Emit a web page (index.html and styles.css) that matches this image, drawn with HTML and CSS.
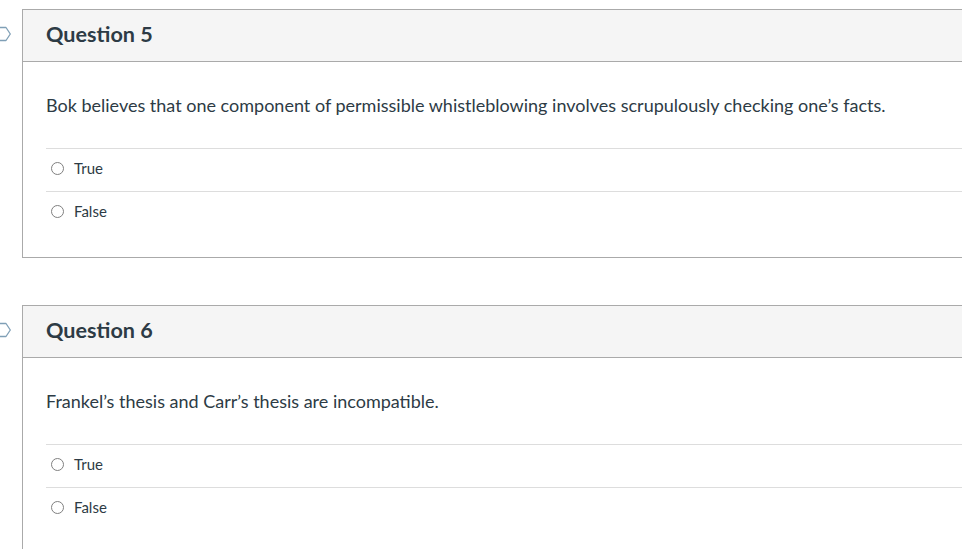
FILE: index.html
```html
<!DOCTYPE html>
<html lang="en">
<head>
    <meta charset="UTF-8">
    <title>Quiz</title>
    <link rel="stylesheet" href="styles.css">
</head>
<body>
    <div class="quiz">
        <div class="question-row">
            <div class="flag">
                <svg width="22" height="16" viewBox="0 0 22 16">
                    <path d="M-6 1.5 H6 L10.3 8 L6 14.5 H-6" fill="none" stroke="#7f9fb6" stroke-width="1.3" stroke-linejoin="round"/>
                </svg>
            </div>
            <div class="question">
                <div class="header"><h2>Question 5</h2></div>
                <div class="content">
                    <p class="text">Bok believes that one component of permissible whistleblowing involves scrupulously checking one’s facts.</p>
                    <div class="answers">
                        <label class="answer"><span class="radio"></span>True</label>
                        <label class="answer"><span class="radio"></span>False</label>
                    </div>
                </div>
            </div>
        </div>

        <div class="question-row">
            <div class="flag">
                <svg width="22" height="16" viewBox="0 0 22 16">
                    <path d="M-6 1.5 H6 L10.3 8 L6 14.5 H-6" fill="none" stroke="#7f9fb6" stroke-width="1.3" stroke-linejoin="round"/>
                </svg>
            </div>
            <div class="question">
                <div class="header"><h2>Question 6</h2></div>
                <div class="content">
                    <p class="text">Frankel’s thesis and Carr’s thesis are incompatible.</p>
                    <div class="answers">
                        <label class="answer"><span class="radio"></span>True</label>
                        <label class="answer"><span class="radio"></span>False</label>
                    </div>
                </div>
            </div>
        </div>
    </div>
</body>
</html>
```

FILE: styles.css
```css
html, body {
    margin: 0;
    overflow: hidden;
}
body {
    font-family: Lato, "Liberation Sans", sans-serif;
    color: #2d3b45;
    background-color: #fff;
}
.quiz {
    padding-top: 9px;
    width: 1020px;
}
.question-row {
    display: flex;
    margin-bottom: 47px;
}
.flag {
    width: 22px;
    flex: none;
    padding-top: 17px;
}
.flag svg {
    display: block;
}
.question {
    flex: 1;
    border: 1px solid #aaaaaa;
}
.header {
    background-color: #f5f5f5;
    border-bottom: 1px solid #aaaaaa;
    height: 52px;
    box-sizing: border-box;
    display: flex;
    align-items: center;
    padding: 0 0 4px 23px;
}
.header h2 {
    margin: 0;
    font-size: 21.6px;
    font-weight: bold;
}
.content {
    padding: 31px 0 23px 23px;
}
.text {
    margin: 0 0 31px;
    font-size: 18px;
    line-height: 24px;
}
.answer {
    display: flex;
    align-items: center;
    height: 43px;
    box-sizing: border-box;
    padding-bottom: 4px;
    border-top: 1px solid #dddddd;
    font-size: 15px;
}
.radio {
    width: 11px;
    height: 11px;
    border: 1px solid #808080;
    border-radius: 50%;
    margin: 0 10px 0 5px;
}
```
